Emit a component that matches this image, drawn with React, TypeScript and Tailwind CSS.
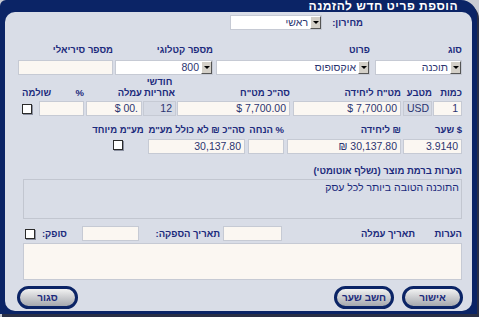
import React from "react";

const font = "font-['Liberation_Sans',Arial,sans-serif]";

const Label = ({ children, className = "" }: { children: React.ReactNode; className?: string }) => (
  <div className={`text-[9.5px] leading-[11px] font-bold text-[#1b2a7c] whitespace-nowrap ${className}`}>{children}</div>
);

const Input = ({ value = "", w, gray = false }: { value?: string; w: string; gray?: boolean }) => (
  <div
    dir="ltr"
    className={`${w} h-[15px] shrink-0 border border-[#c6cad4] px-[3px] text-right text-[10.5px] leading-[13px] text-[#2b3470] whitespace-nowrap ${
      gray ? "bg-[#d6dae4]" : "bg-[#fbf7f2]"
    }`}
  >
    {value}
  </div>
);

const Select = ({ value, w }: { value: string; w: string }) => (
  <div className={`${w} h-[15px] shrink-0 border border-[#c6cad4] bg-white flex items-center`}>
    <div className="w-[11px] h-[13px] bg-[#d4d0c8] border-t border-l border-t-white border-l-white border-b border-r border-b-[#555] border-r-[#555] flex items-center justify-center">
      <div className="w-0 h-0 border-l-[3px] border-r-[3px] border-t-[3px] border-l-transparent border-r-transparent border-t-black" />
    </div>
    <div className="pr-[2px] text-[10.5px] leading-[13px] text-[#2b3470]">{value}</div>
  </div>
);

const Check = () => (
  <div className="w-[10px] h-[10px] shrink-0 border-[1.5px] border-[#2b2b2b] bg-white shadow-[1px_1px_0_#8a8fa0]" />
);

const Btn = ({ children, w = "w-[61px]" }: { children: React.ReactNode; w?: string }) => (
  <div className={`${w} h-[23px] rounded-full border-[3px] border-[#0b2466] bg-gradient-to-b from-[#f2f2f2] to-[#a5a8ae] flex items-center justify-center text-[10px] font-bold text-[#1b2a7c]`}>
    {children}
  </div>
);

const Field = ({ label, children, w, className = "" }: { label: React.ReactNode; children: React.ReactNode; w: string; className?: string }) => (
  <div className={`${w} shrink-0 flex flex-col ${className}`}>
    <Label>{label}</Label>
    {children}
  </div>
);

export default function App() {
  return (
    <div className={`w-[479px] h-[317px] bg-[#c9ccd4] overflow-hidden ${font}`}>
      <div
        dir="rtl"
        className="w-[477px] h-[314px] bg-[#0b2466] rounded-tl-[6px] rounded-tr-[16px] flex flex-col pl-[5px] pr-[5px] pb-[3px] shadow-[2px_3px_0_#2a2f45]"
      >
        <div className="h-[12px] shrink-0 pr-[14px] text-[12px] leading-[12px] font-bold text-white tracking-[0.5px]">
          הוספת פריט חדש להזמנה
        </div>
        <div className="flex-1 bg-[#d9dde7] rounded-[10px] pr-[10px] pl-[13px] flex flex-col">
          {/* row 1 */}
          <div className="flex items-center mt-[3px] pr-[99px]">
            <Label className="w-[41px] shrink-0">מחירון:</Label>
            <Select value="ראשי" w="w-[92px]" />
          </div>

          {/* row 2 */}
          <div className="flex mt-[14px]">
            <Field label="סוג" w="w-[87px]" className="gap-[5px]">
              <Select value="תוכנה" w="w-[87px]" />
            </Field>
            <Field label="פרוט" w="w-[154px]" className="gap-[5px] mr-[5px]">
              <Select value="אוקסופוס" w="w-[154px]" />
            </Field>
            <Field label="מספר קטלוגי" w="w-[98px]" className="gap-[5px] mr-[3px]">
              <Select value="800" w="w-[98px]" />
            </Field>
            <Field label="מספר סיריאלי" w="w-[95px]" className="gap-[5px] mr-[2px]">
              <Input w="w-[95px]" />
            </Field>
          </div>

          {/* row 3 */}
          <div className="flex items-end mt-[1px]">
            <Field label="כמות" w="w-[29px]" className="gap-[3px]">
              <Input value="1" w="w-[29px]" />
            </Field>
            <Field label="מטבע" w="w-[29px]" className="gap-[3px] mr-[1px]">
              <Input value="USD" w="w-[29px]" gray />
            </Field>
            <Field label='מט"ח ליחידה' w="w-[108px]" className="gap-[3px] mr-[2px]">
              <Input value="$ 7,700.00" w="w-[108px]" />
            </Field>
            <Field label='סה"כ מט"ח' w="w-[113px]" className="gap-[3px] mr-[3px]">
              <Input value="$ 7,700.00" w="w-[113px]" />
            </Field>
            <div className="w-[33px] shrink-0 mr-[1px] flex flex-col items-center gap-[3px]">
              <Label className="text-center">
                חודשי
                <br />
                אחריות
              </Label>
              <Input value="12" w="w-[33px]" gray />
            </div>
            <Field label="עמלה" w="w-[56px]" className="gap-[3px] mr-[1px]">
              <Input value="$ 00." w="w-[56px]" />
            </Field>
            <Field label="%" w="w-[45px]" className="gap-[3px] mr-[2px]">
              <Input w="w-[45px]" />
            </Field>
            <div className="w-[30px] shrink-0 mr-[-13px] flex flex-col items-end">
              <Label>שולמה</Label>
              <div className="h-[15px] mt-[3px] flex items-center">
                <Check />
              </div>
            </div>
          </div>

          {/* row 4 */}
          <div className="flex items-start mt-[8px]">
            <Field label="$ שער" w="w-[59px]" className="gap-[4px]">
              <Input value="3.9140" w="w-[59px]" />
            </Field>
            <Field label="₪ ליחידה" w="w-[114px]" className="gap-[4px] mr-[2px]">
              <Input value="₪ 30,137.80" w="w-[114px]" />
            </Field>
            <Field label="% הנחה" w="w-[36px]" className="gap-[4px] mr-[3px]">
              <Input w="w-[36px]" />
            </Field>
            <Field label='סה"כ ₪ לא כולל מע"מ' w="w-[97px]" className="gap-[4px] mr-[3px]">
              <Input value="30,137.80" w="w-[97px]" />
            </Field>
            <div className="w-[50px] shrink-0 mr-[5px] flex flex-col items-center gap-[5px]">
              <Label>מע"מ מיוחד</Label>
              <Check />
            </div>
          </div>

          {/* row 5 */}
          <Label className="mt-[11px]">הערות ברמת מוצר (נשלף אוטומטי)</Label>
          <div className="mt-[3px] ml-[5px] h-[40px] shrink-0 border border-[#c2c6d0] bg-[#d9dde7] px-[2px] pt-[1px] text-[10.5px] leading-[13px] text-[#1b2a7c]">
            התוכנה הטובה ביותר לכל עסק
          </div>

          {/* row 6 */}
          <div className="flex items-center mt-[7px] ml-[5px]">
            <Label className="w-[47px] shrink-0">הערות</Label>
            <Label className="w-[133px] shrink-0">תאריך עמלה</Label>
            <Input w="w-[59px]" />
            <Label className="w-[84px] shrink-0 pr-[3px]">תאריך הספקה:</Label>
            <Input w="w-[57px]" />
            <Label className="w-[47px] shrink-0 pr-[15px]">סופק:</Label>
            <Check />
          </div>

          {/* row 7 */}
          <div className="mt-[2px] ml-[5px] h-[37px] shrink-0 border border-[#c6cad4] bg-[#fbf7f2]" />

          {/* buttons */}
          <div className="flex justify-between mt-[6px] ml-[-1px] mr-[-1px]">
            <div className="flex gap-[8px]">
              <Btn>אישור</Btn>
              <Btn w="w-[60px]">חשב שער</Btn>
            </div>
            <Btn>סגור</Btn>
          </div>
        </div>
      </div>
    </div>
  );
}
